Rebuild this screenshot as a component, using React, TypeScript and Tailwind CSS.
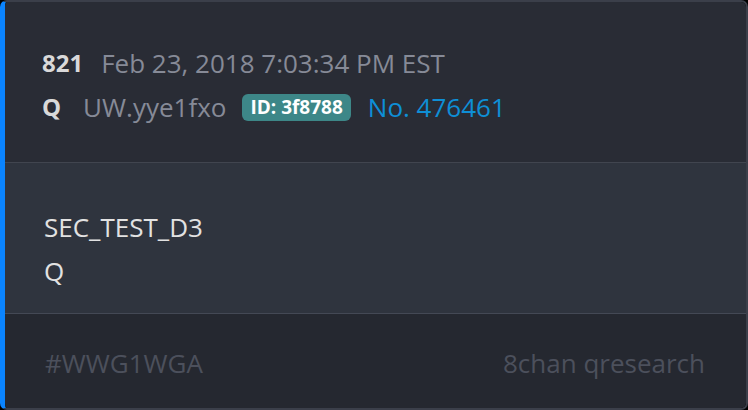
import React from "react";

export default function App() {
  return (
    <div className="w-[748px] h-[410px] bg-black" style={{ fontFamily: '"Open Sans", sans-serif' }}>
      <div className="w-[748px] h-[410px] flex flex-col rounded-[7px] overflow-hidden border-l-[5px] border-l-[#0a84ff] border-t-2 border-r-2 border-b-2 border-t-[#3b3f4a] border-r-[#3b3f4a] border-b-[#3b3f4a]">
        <div className="h-[161px] shrink-0 bg-[#292c35] pl-[37px] pt-[39px] border-b border-b-[#41454f]">
          <div className="flex items-center h-[44px] text-[26px] leading-[44px]">
            <span className="font-bold text-[24px] text-[#d9d9d9]">821</span>
            <span className="ml-[18px] text-[#868a97]">Feb 23, 2018 7:03:34 PM EST</span>
          </div>
          <div className="flex items-center h-[44px] text-[26px] leading-[44px]">
            <span className="font-bold text-[24px] text-[#d9d9d9]">Q</span>
            <span className="ml-[22px] text-[#868a97]">UW.yye1fxo</span>
            <span className="ml-[16px] h-[27px] px-[8px] rounded-[6px] bg-[#3d8788] text-white font-bold text-[19px] leading-[27px]">ID: 3f8788</span>
            <span className="ml-[17px] text-[#0e8fd6]">No. 476461</span>
          </div>
        </div>
        <div className="h-[151px] shrink-0 bg-[#2f343e] pl-[39px] pt-[42px] border-b border-b-[#444955] text-[26px] leading-[44px] text-[#e2e2e2]">
          <div>SEC_TEST_D3</div>
          <div>Q</div>
        </div>
        <div className="flex-1 bg-[#252830] pl-[40px] pr-[41px] pt-[27px] flex justify-between text-[26px] leading-[44px] text-[#4c505c]">
          <span>#WWG1WGA</span>
          <span>8chan qresearch</span>
        </div>
      </div>
    </div>
  );
}
